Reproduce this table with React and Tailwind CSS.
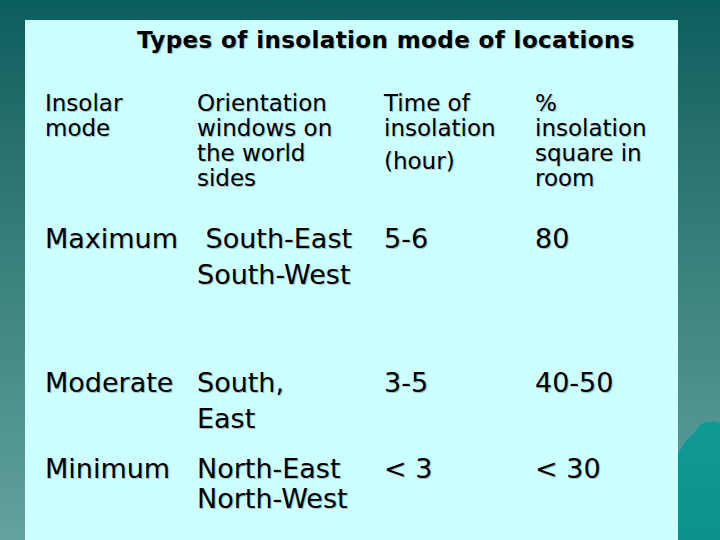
const headerCols = [
  { lines: ["Insolar", "mode"] },
  { lines: ["Orientation", "windows on", "the world", "sides"] },
  { lines: ["Time of", "insolation"], extra: "(hour)" },
  { lines: ["%", "insolation", "square in", "room"] },
];

const rows = [
  {
    mode: "Maximum",
    sides: ["\u00a0South-East", "South-West"],
    time: "5-6",
    square: "80",
    lead: "leading-[36px]",
    gap: "mt-[30px]",
  },
  {
    mode: "Moderate",
    sides: ["South,", "East"],
    time: "3-5",
    square: "40-50",
    lead: "leading-[36px]",
    gap: "mt-[72px]",
  },
  {
    mode: "Minimum",
    sides: ["North-East", "North-West"],
    time: "< 3",
    square: "< 30",
    lead: "leading-[30px]",
    gap: "mt-[17px]",
  },
];

const grid = "grid grid-cols-[152px_187px_151px_1fr]";

const Mountain = () => (
  <svg
    className="absolute right-0 bottom-0"
    width="42"
    height="120"
    viewBox="678 420 42 120"
  >
    <defs>
      <linearGradient id="mt" x1="0" y1="0" x2="0" y2="1">
        <stop offset="0" stopColor="#109a96" />
        <stop offset="1" stopColor="#0c918e" />
      </linearGradient>
    </defs>
    <path
      d="M678 453 L683 446 L686 440 L690 437 L695 432 L700 425 L705 422 L710 422 L715 421 L720 423 L720 540 L678 540 Z"
      fill="url(#mt)"
    />
  </svg>
);

export default function App() {
  return (
    <div className="relative w-[720px] h-[540px] overflow-hidden bg-gradient-to-b from-[#0a5e5e] via-[#3a817e] to-[#62a29f] pt-[20px] pl-[25px] font-['DejaVu_Sans',Verdana,sans-serif] text-black">
      <Mountain />
      <div className="relative w-[653px] h-[520px] bg-[#ccffff] pl-[20px] [text-shadow:1px_1px_0_#9cc3c6]">
        <h1 className="pt-[6px] pl-[92px] text-[23px] leading-[28px] font-bold tracking-[0.4px]">
          Types of insolation mode of locations
        </h1>

        <div className={`${grid} mt-[37px] text-[23px] leading-[25px]`}>
          {headerCols.map((c, i) => (
            <div key={i}>
              {c.lines.map((l) => (
                <div key={l}>{l}</div>
              ))}
              {c.extra && <div className="mt-[8px]">{c.extra}</div>}
            </div>
          ))}
        </div>

        {rows.map((r) => (
          <div key={r.mode} className={`${grid} ${r.gap} ${r.lead} text-[27px]`}>
            <div>{r.mode}</div>
            <div>
              {r.sides.map((s) => (
                <div key={s} className="whitespace-pre">
                  {s}
                </div>
              ))}
            </div>
            <div>{r.time}</div>
            <div>{r.square}</div>
          </div>
        ))}
      </div>
    </div>
  );
}
